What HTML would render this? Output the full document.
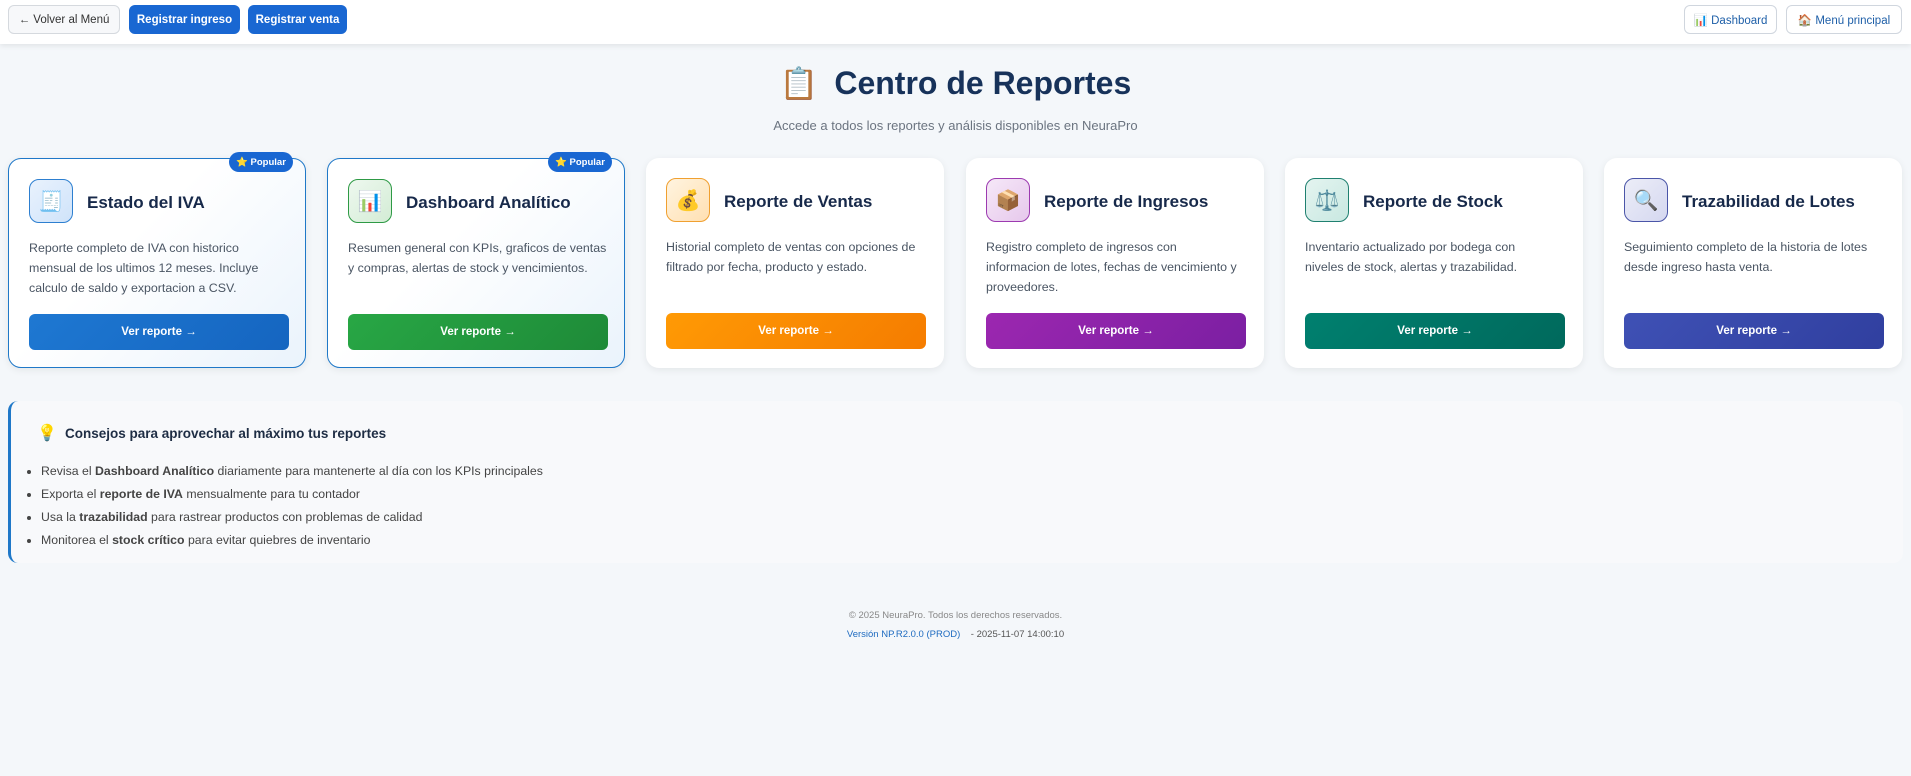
<!DOCTYPE html>
<html><head><meta charset="utf-8">
<style>
*{box-sizing:border-box;margin:0;padding:0}
body{width:1911px;height:776px;overflow:hidden;background:#f4f7fa;font-family:"Liberation Sans","DejaVu Sans",sans-serif;color:#1b2b45;position:relative}
.nav{position:absolute;left:0;top:0;width:1911px;height:44px;background:#fff;box-shadow:0 2px 5px rgba(0,0,0,.08)}
.nb{position:absolute;top:5px;height:29px;border-radius:6px;font-size:11.5px;display:flex;align-items:center;justify-content:center;white-space:nowrap}
.nb.l{background:#f7f8fa;border:1px solid #d5d9de;color:#333}
.nb.b{background:#1967d2;color:#fff;font-weight:bold}
.nb.o{background:#fff;border:1px solid #d0d6de;color:#1e5fa8}
h1{position:absolute;left:0;width:1911px;top:65px;text-align:center;font-size:32px;font-weight:bold;color:#17325a}
.sub{position:absolute;left:0;width:1911px;top:118px;text-align:center;font-size:13px;color:#6b7480}
.card{position:absolute;top:158px;width:298px;height:210px;border-radius:13px;background:#fff;box-shadow:0 2px 8px rgba(0,0,0,.07)}
.card.pop{border:1.5px solid #1f78c8;background:linear-gradient(135deg,#fff 40%,#eaf3fc)}
.ic{position:absolute;left:20px;top:20px;width:44px;height:44px;border-radius:10px;border:1.5px solid;display:flex;align-items:center;justify-content:center;font-size:20px}
.ct{position:absolute;left:78px;top:34px;font-size:17px;font-weight:bold;color:#17294a;white-space:nowrap}
.cd{position:absolute;left:20px;top:79px;width:275px;font-size:12.4px;line-height:20px;color:#4a5563;white-space:nowrap}
.bt{position:absolute;left:20px;top:155px;width:260px;height:36px;border-radius:6px;color:#fff;font-size:11.5px;font-weight:bold;display:flex;align-items:center;justify-content:center}
.badge{position:absolute;left:220px;top:-7px;width:64px;height:20px;border-radius:10px;background:#1967d2;color:#fff;font-size:9.5px;font-weight:bold;display:flex;align-items:center;justify-content:center}
.tips{position:absolute;left:8px;top:401px;width:1895px;height:162px;background:#f8f9fb;border-left:3px solid #1f78c8;border-radius:10px}
.tips h3{position:absolute;left:54px;top:25px;font-size:13.5px;font-weight:bold;color:#1e2d44}
.tips .bulb{position:absolute;left:26px;top:22px;font-size:16px}
.tips ul{position:absolute;left:30px;top:59px;font-size:12.3px;color:#444;line-height:23px}
.ft{position:absolute;left:0;width:1911px;text-align:center;font-size:9.5px;color:#888}
</style></head><body>
<div class="nav">
<div class="nb l" style="left:8px;width:112px">← Volver al Menú</div>
<div class="nb b" style="left:129px;width:111px">Registrar ingreso</div>
<div class="nb b" style="left:248px;width:99px">Registrar venta</div>
<div class="nb o" style="left:1684px;width:93px">📊 Dashboard</div>
<div class="nb o" style="left:1786px;width:116px">🏠 Menú principal</div>
</div>
<h1><span style="font-size:31px;margin-right:16px">📋</span>Centro de Reportes</h1>
<div class="sub">Accede a todos los reportes y análisis disponibles en NeuraPro</div>

<div class="card pop" style="left:8px"><div class="badge">⭐ Popular</div>
<div class="ic" style="background:linear-gradient(135deg,#e9f2fd,#cfe3fa);border-color:#2d7fd0">🧾</div>
<div class="ct">Estado del IVA</div>
<div class="cd">Reporte completo de IVA con historico<br>mensual de los ultimos 12 meses. Incluye<br>calculo de saldo y exportacion a CSV.</div>
<div class="bt" style="background:linear-gradient(135deg,#1e78d2,#1565c0)">Ver reporte →</div></div>

<div class="card pop" style="left:327px"><div class="badge">⭐ Popular</div>
<div class="ic" style="background:linear-gradient(135deg,#eef8ef,#d3ecd5);border-color:#2e9a45">📊</div>
<div class="ct">Dashboard Analítico</div>
<div class="cd">Resumen general con KPIs, graficos de ventas<br>y compras, alertas de stock y vencimientos.</div>
<div class="bt" style="background:linear-gradient(135deg,#28a745,#1e8a38)">Ver reporte →</div></div>

<div class="card" style="left:646px">
<div class="ic" style="background:linear-gradient(135deg,#fff4e0,#ffe0b2);border-color:#f0a030">💰</div>
<div class="ct">Reporte de Ventas</div>
<div class="cd">Historial completo de ventas con opciones de<br>filtrado por fecha, producto y estado.</div>
<div class="bt" style="background:linear-gradient(135deg,#ff9a05,#f57c00)">Ver reporte →</div></div>

<div class="card" style="left:966px">
<div class="ic" style="background:linear-gradient(135deg,#f6e8f8,#e6c8ec);border-color:#9c3ab0">📦</div>
<div class="ct">Reporte de Ingresos</div>
<div class="cd">Registro completo de ingresos con<br>informacion de lotes, fechas de vencimiento y<br>proveedores.</div>
<div class="bt" style="background:linear-gradient(135deg,#9c27b0,#7b1fa2)">Ver reporte →</div></div>

<div class="card" style="left:1285px">
<div class="ic" style="background:linear-gradient(135deg,#e4f4f0,#c8e8e1);border-color:#1f8070">⚖️</div>
<div class="ct">Reporte de Stock</div>
<div class="cd">Inventario actualizado por bodega con<br>niveles de stock, alertas y trazabilidad.</div>
<div class="bt" style="background:linear-gradient(135deg,#00806f,#00695c)">Ver reporte →</div></div>

<div class="card" style="left:1604px">
<div class="ic" style="background:linear-gradient(135deg,#ecedf8,#d5d8f0);border-color:#4a55a8">🔍</div>
<div class="ct">Trazabilidad de Lotes</div>
<div class="cd">Seguimiento completo de la historia de lotes<br>desde ingreso hasta venta.</div>
<div class="bt" style="background:linear-gradient(135deg,#3f51b5,#303f9f)">Ver reporte →</div></div>

<div class="tips">
<span class="bulb">💡</span>
<h3>Consejos para aprovechar al máximo tus reportes</h3>
<ul>
<li>Revisa el <b>Dashboard Analítico</b> diariamente para mantenerte al día con los KPIs principales</li>
<li>Exporta el <b>reporte de IVA</b> mensualmente para tu contador</li>
<li>Usa la <b>trazabilidad</b> para rastrear productos con problemas de calidad</li>
<li>Monitorea el <b>stock crítico</b> para evitar quiebres de inventario</li>
</ul>
</div>

<div class="ft" style="top:610px">© 2025 NeuraPro. Todos los derechos reservados.</div>
<div class="ft" style="top:629px"><span style="color:#1e6bc0">Versión NP.R2.0.0 (PROD)</span>&nbsp;&nbsp;&nbsp;&nbsp;<span style="color:#555">- 2025-11-07 14:00:10</span></div>
</body></html>
